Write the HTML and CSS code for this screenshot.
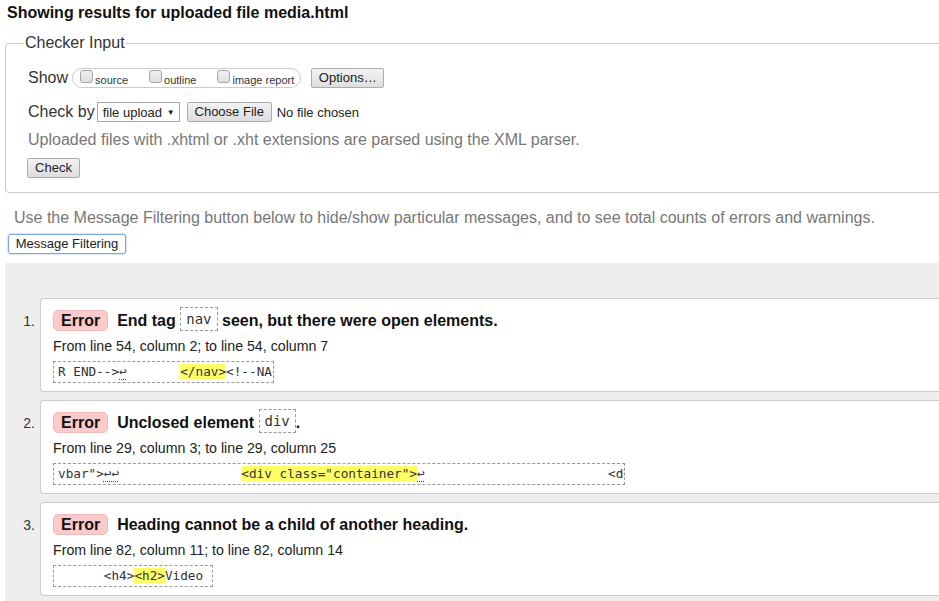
FILE: index.html
```html
<!DOCTYPE html>
<html lang="en">
<head>
<meta charset="utf-8">
<title>Showing results for uploaded file media.html</title>
<link rel="stylesheet" href="styles.css">
</head>
<body>
<div class="page">
  <h2 class="title">Showing results for uploaded file media.html</h2>

  <fieldset class="checker">
    <legend class="legend">Checker Input</legend>
    <div class="row show-row">
      <span class="lbl">Show</span>
      <span class="pill">
        <span class="opt"><span class="cb"></span>source</span>
        <span class="opt"><span class="cb"></span>outline</span>
        <span class="opt"><span class="cb"></span>image report</span>
      </span>
      <button type="button" class="btn btn-options">Options…</button>
    </div>
    <div class="row check-row">
      <span class="lbl">Check by</span>
      <span class="select">file upload <span class="arrow">▼</span></span>
      <button type="button" class="btn btn-choose">Choose File</button>
      <span class="nofile">No file chosen</span>
    </div>
    <p class="hint">Uploaded files with .xhtml or .xht extensions are parsed using the XML parser.</p>
    <button type="button" class="btn btn-check">Check</button>
  </fieldset>

  <p class="filter-note">Use the Message Filtering button below to hide/show particular messages, and to see total counts of errors and warnings.</p>
  <button type="button" class="btn btn-filter">Message Filtering</button>

  <div class="results">
    <ol class="messages">
      <li class="item">
        <span class="num">1.</span>
        <div class="card">
          <p class="head"><span class="badge">Error</span><span class="msg">End tag <code class="tag">nav</code> seen, but there were open elements.</span></p>
          <p class="loc">From line 54, column 2; to line 54, column 7</p>
          <code class="extract">R END--&gt;<span class="lf">↩</span>       <mark class="hl">&lt;/nav&gt;</mark>&lt;!--NA</code>
        </div>
      </li>
      <li class="item">
        <span class="num">2.</span>
        <div class="card">
          <p class="head"><span class="badge">Error</span><span class="msg">Unclosed element <code class="tag">div</code>.</span></p>
          <p class="loc">From line 29, column 3; to line 29, column 25</p>
          <code class="extract">vbar"&gt;<span class="lf">↩↩</span>                <mark class="hl">&lt;div class="container"&gt;</mark><span class="lf">↩</span>                        &lt;d</code>
        </div>
      </li>
      <li class="item">
        <span class="num">3.</span>
        <div class="card">
          <p class="head"><span class="badge">Error</span><span class="msg">Heading cannot be a child of another heading.</span></p>
          <p class="loc">From line 82, column 11; to line 82, column 14</p>
          <code class="extract">      &lt;h4&gt;<mark class="hl">&lt;h2&gt;</mark>Video </code>
        </div>
      </li>
    </ol>
  </div>
</div>
</body>
</html>
```

FILE: styles.css
```css
html, body {
  margin: 0;
  padding: 0;
  background: #fff;
  overflow: hidden;
}

body {
  font-family: "Liberation Sans", Arial, sans-serif;
  color: #333;
}

.page {
  width: 1000px;
  padding: 0 5px;
}

.title {
  margin: 4px 0 0 2px;
  font-size: 16px;
  line-height: 18px;
  font-weight: bold;
  color: #111;
}

.checker {
  margin: 12px 0 0;
  padding: 16px 22px 14px;
  border: 1px solid #ccc;
  border-radius: 4px;
  min-width: 0;
}

.legend {
  margin-left: -4px;
  padding: 0 1px;
  font-size: 16px;
  line-height: 18px;
  color: #333;
}

.row {
  display: flex;
  align-items: center;
  height: 20px;
}

.lbl {
  font-size: 16px;
  line-height: 20px;
  color: #333;
}

.pill {
  display: flex;
  align-items: center;
  height: 20px;
  box-sizing: border-box;
  margin-left: 4px;
  padding: 0 6px 0 7px;
  border: 1px solid #ccc;
  border-radius: 10px;
  gap: 21px;
}

.opt {
  display: flex;
  align-items: center;
  font-size: 11px;
  color: #333;
  line-height: 14px;
  padding-top: 3px;
  white-space: nowrap;
}

.cb {
  width: 11px;
  height: 11px;
  margin: -6px 2px 0 0;
  border: 1px solid #a6a6a6;
  border-radius: 3px;
  background: linear-gradient(#f0f0f0, #dedede);
}

.btn {
  box-sizing: border-box;
  height: 20px;
  margin: 0;
  padding: 0 6px;
  border: 1px solid #acacac;
  border-radius: 2px;
  background: linear-gradient(#f2f2f2, #dedede);
  font-family: "Liberation Sans", Arial, sans-serif;
  font-size: 13px;
  line-height: 18px;
  color: #222;
  white-space: nowrap;
}

.btn-options {
  margin-left: 10px;
  width: 73px;
}

.check-row {
  margin-top: 14px;
}

.select {
  display: flex;
  align-items: center;
  box-sizing: border-box;
  height: 20px;
  width: 83px;
  margin-left: 2px;
  padding: 0 4px 0 5px;
  border: 1px solid #a9a9a9;
  background: #fff;
  font-size: 13px;
  color: #222;
  justify-content: space-between;
  white-space: nowrap;
}

.arrow {
  font-size: 8px;
}

.btn-choose {
  margin-left: 7px;
  width: 85px;
}

.nofile {
  margin-left: 5px;
  font-size: 13px;
  color: #222;
  white-space: nowrap;
}

.hint {
  margin: 9px 0 0;
  font-size: 16px;
  line-height: 18px;
  color: #777;
}

.btn-check {
  display: block;
  margin-top: 9px;
  margin-left: -1px;
  width: 53px;
}

.filter-note {
  margin: 16px 0 0 9px;
  font-size: 16px;
  line-height: 18px;
  color: #777;
  white-space: nowrap;
}

.btn-filter {
  display: block;
  margin: 7px 0 0 3px;
  width: 118px;
  background: #fff;
  border: 1px solid #7fa6d8;
  border-radius: 3px;
  box-shadow: 0 0 0 1px #dce8f6;
}

.results {
  margin-top: 9px;
  padding: 35px 0 10px;
  background: #eee;
}

.messages {
  list-style: none;
  margin: 0;
  padding: 0;
}

.item {
  display: flex;
  align-items: flex-start;
  margin-bottom: 8px;
}

.num {
  width: 30px;
  padding: 11px 5px 0 0;
  text-align: right;
  font-size: 14px;
  line-height: 24px;
  color: #333;
}

.card {
  flex: 1;
  padding: 8px 12px 8px;
  border: 1px solid #ccc;
  border-right: 0;
  border-radius: 4px 0 0 4px;
  background: #fff;
}

.head {
  margin: 0;
  height: 24px;
  line-height: 27px;
  font-size: 16px;
  font-weight: bold;
  color: #111;
  white-space: nowrap;
}

.badge {
  display: inline-block;
  box-sizing: border-box;
  height: 21px;
  line-height: 20px;
  padding: 0 7px;
  margin-right: 9px;
  border: 1px solid #f2b9b9;
  border-radius: 5px;
  background: #fbcaca;
  vertical-align: 0;
}

.tag {
  display: inline-block;
  box-sizing: border-box;
  height: 24px;
  padding: 0 5px;
  border: 1px dashed #999;
  font-family: "DejaVu Sans Mono", "Liberation Mono", monospace;
  font-size: 14px;
  line-height: 22px;
  font-weight: normal;
  color: #333;
  vertical-align: top;
}

.loc {
  margin: 6px 0 0;
  font-size: 14.2px;
  line-height: 18px;
  color: #222;
  white-space: nowrap;
}

.extract {
  display: inline-block;
  box-sizing: border-box;
  height: 22px;
  margin-top: 6px;
  padding: 0 1px 0 4px;
  border: 1px dashed #999;
  font-family: "DejaVu Sans Mono", "Liberation Mono", monospace;
  font-size: 12.7px;
  line-height: 20px;
  white-space: pre;
  color: #333;
  vertical-align: top;
}

.hl {
  background: #ff6;
  color: #333;
}

.lf {
  text-decoration: underline dotted #555;
  text-underline-offset: 3px;
}
```
